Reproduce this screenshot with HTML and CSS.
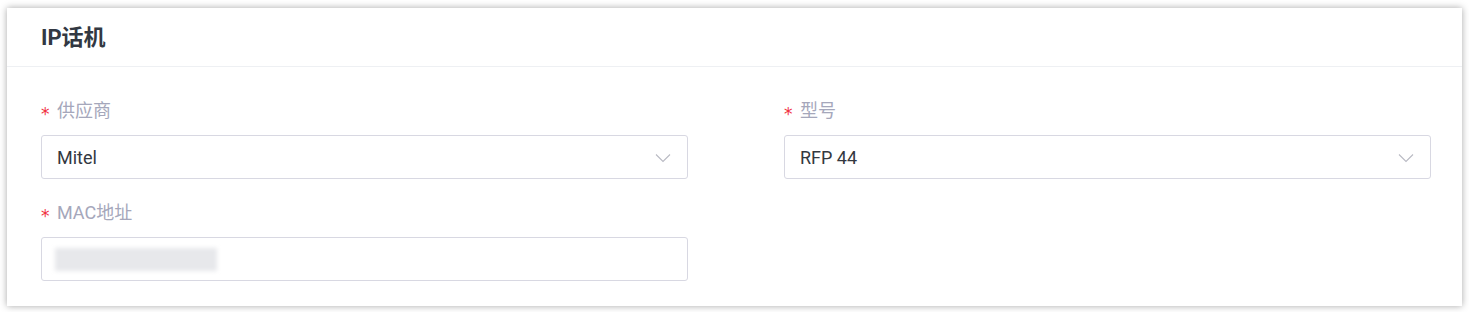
FILE: index.html
```html
<!DOCTYPE html>
<html lang="zh">
<head>
<meta charset="utf-8">
<link rel="stylesheet" href="styles.css">
</head>
<body>
<div class="card">
  <div class="card-head"><h2 class="title">IP话机</h2></div>
  <div class="form">
    <div class="field">
      <div class="label"><span class="req">*</span>供应商</div>
      <div class="input select"><span class="value">Mitel</span>
        <svg class="chev" width="16" height="10" viewBox="0 0 16 10"><path d="M1 1.5 L8 8.5 L15 1.5" fill="none" stroke="#b9bac3" stroke-width="1.1"/></svg>
      </div>
    </div>
    <div class="field">
      <div class="label"><span class="req">*</span>型号</div>
      <div class="input select"><span class="value">RFP 44</span>
        <svg class="chev" width="16" height="10" viewBox="0 0 16 10"><path d="M1 1.5 L8 8.5 L15 1.5" fill="none" stroke="#b9bac3" stroke-width="1.1"/></svg>
      </div>
    </div>
    <div class="field">
      <div class="label"><span class="req">*</span>MAC地址</div>
      <div class="input"><span class="blur"></span></div>
    </div>
  </div>
</div>
</body>
</html>
```
FILE: styles.css
```css
html, body { margin: 0; background: #ffffff; }
body {
  padding: 8px 7px 6px 7px;
  font-family: Roboto, "Noto Sans CJK SC", sans-serif;
}
.card {
  background: #fff;
  box-shadow: 0 0 7px rgba(0,0,0,0.35);
  height: 298px;
  box-sizing: border-box;
}
.card-head {
  height: 59px;
  border-bottom: 1px solid #eef0f3;
  display: flex;
  align-items: center;
  padding-left: 34px;
  box-sizing: border-box;
}
.title {
  margin: 0;
  padding-top: 1px;
  font-size: 22px;
  line-height: 28px;
  font-weight: 700;
  color: #323842;
  font-family: Roboto, "Noto Sans CJK SC", sans-serif;
}
.form {
  display: grid;
  grid-template-columns: 647px 647px;
  column-gap: 96px;
  row-gap: 22px;
  padding: 32px 31px 0 34px;
}
.label {
  font-size: 18px;
  line-height: 24px;
  color: #a5a7bb;
  margin-bottom: 12px;
  display: flex;
  align-items: center;
}
.req {
  color: #f0303f;
  font-family: "DejaVu Sans", sans-serif;
  font-size: 17px;
  width: 16px;
  line-height: 24px;
  position: relative;
  top: 3px;
}
.input {
  height: 44px;
  box-sizing: border-box;
  border: 1px solid #d8d8e2;
  border-radius: 3px;
  display: flex;
  align-items: center;
  padding: 0 16px 0 15px;
  font-size: 18px;
  color: #333840;
}
.select { justify-content: space-between; }
.chev { display: block; margin-top: 1px; }
.blur {
  display: block;
  width: 162px;
  height: 23px;
  margin-left: -2px;
  background: #e7e8eb;
  filter: blur(2px);
}
```
